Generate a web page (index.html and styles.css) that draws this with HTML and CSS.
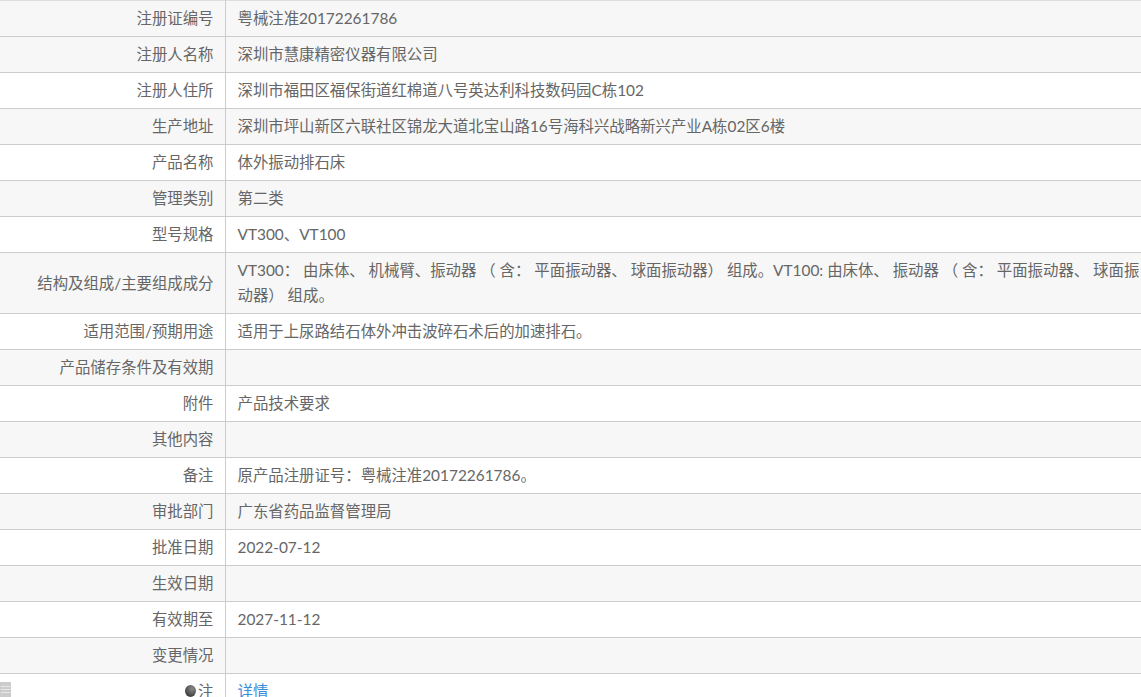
FILE: index.html
```html
<!DOCTYPE html>
<html lang="zh-CN">
<head>
<meta charset="utf-8">
<title>注册证详情</title>
<link rel="stylesheet" href="styles.css">
</head>
<body>
<table class="info">
<colgroup><col class="c-label"><col></colgroup>
<tbody>
<tr><th>注册证编号</th><td>粤械注准20172261786</td></tr>
<tr><th>注册人名称</th><td>深圳市慧康精密仪器有限公司</td></tr>
<tr><th>注册人住所</th><td>深圳市福田区福保街道红棉道八号英达利科技数码园C栋102</td></tr>
<tr><th>生产地址</th><td>深圳市坪山新区六联社区锦龙大道北宝山路16号海科兴战略新兴产业A栋02区6楼</td></tr>
<tr><th>产品名称</th><td>体外振动排石床</td></tr>
<tr><th>管理类别</th><td>第二类</td></tr>
<tr><th>型号规格</th><td>VT300、VT100</td></tr>
<tr><th>结构及组成/主要组成成分</th><td>VT300： 由床体、 机械臂、振动器 （ 含： 平面振动器、 球面振动器） 组成。VT100: 由床体、 振动器 （ 含： 平面振动器、 球面振动器） 组成。</td></tr>
<tr><th>适用范围/预期用途</th><td>适用于上尿路结石体外冲击波碎石术后的加速排石。</td></tr>
<tr><th>产品储存条件及有效期</th><td></td></tr>
<tr><th>附件</th><td>产品技术要求</td></tr>
<tr><th>其他内容</th><td></td></tr>
<tr><th>备注</th><td>原产品注册证号：粤械注准20172261786。</td></tr>
<tr><th>审批部门</th><td>广东省药品监督管理局</td></tr>
<tr><th>批准日期</th><td>2022-07-12</td></tr>
<tr><th>生效日期</th><td></td></tr>
<tr><th>有效期至</th><td>2027-11-12</td></tr>
<tr><th>变更情况</th><td></td></tr>
<tr><th><span class="dot"></span>注</th><td><a class="link" href="#">详情</a></td></tr>
</tbody>
</table>
<div class="side-tab"><span></span><span></span><span></span></div>
</body>
</html>
```
FILE: styles.css
```css
html, body {
  margin: 0;
  padding: 0;
  height: 697px;
  overflow: hidden;
  background: #fff;
}
body {
  position: relative;
  font-family: "Lato", "Noto Sans CJK SC", sans-serif;
  font-size: 15.4px;
  line-height: 25px;
  color: #666;
}
.info {
  width: 1141px;
  table-layout: fixed;
  border-collapse: collapse;
  border-top: 1px solid #ddd;
}
.c-label { width: 225px; }
.info th, .info td {
  padding: 5px 0 5px 12px;
  border-bottom: 1px solid #ccc;
  font-weight: 400;
  vertical-align: middle;
  word-break: break-all;
}
.info th {
  padding: 5px 11px 5px 0;
  text-align: right;
  border-right: 1px solid #ccc;
}
.info tr:nth-child(even) { background: #f7f7f7; }
.info tr:first-child { background: #f7f7f7; }
.dot {
  display: inline-block;
  width: 11px;
  height: 12px;
  margin-right: 2px;
  border-radius: 50%;
  background: radial-gradient(circle at 65% 30%, #888, #444 70%);
  vertical-align: 0;
}
.link { color: #3c8dd8; text-decoration: none; }
.side-tab {
  position: absolute;
  left: 0;
  top: 682px;
  width: 11px;
  height: 15px;
  padding: 4px 1px 0;
  box-sizing: border-box;
  display: flex;
  flex-direction: column;
  gap: 2px;
  background: #ccc;
}
.side-tab span {
  display: block;
  height: 1px;
  background: #e8e8e8;
}
```
